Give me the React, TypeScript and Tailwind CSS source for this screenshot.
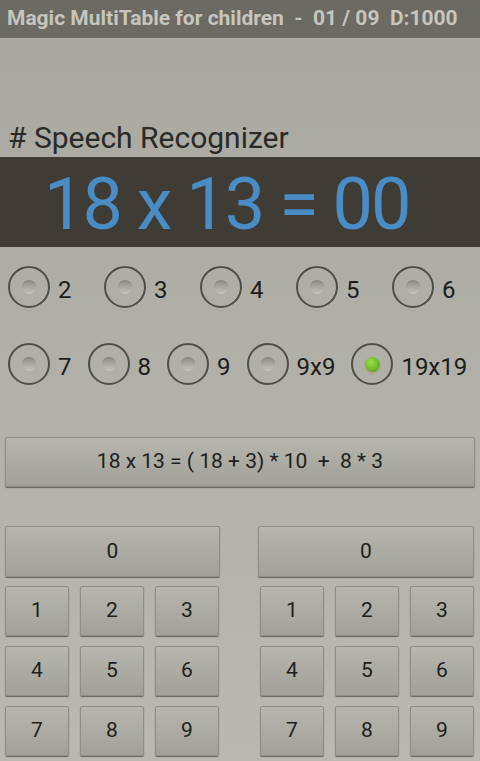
const font = { fontFamily: "Roboto, 'Liberation Sans', sans-serif" };

function Radio({ label, checked = false }: { label: string; checked?: boolean }) {
  return (
    <div className="flex items-start pl-2 pr-[8px]">
      <div className="w-[42px] h-[42px] rounded-full border-2 border-[#4e4e48] flex items-center justify-center">
        {checked ? (
          <div className="w-[15px] h-[15px] rounded-full bg-[radial-gradient(circle_at_40%_35%,#9be04a,#6cb526_60%,#4f8f1a)] shadow-[0_2px_2px_rgba(200,120,60,0.35)]" />
        ) : (
          <div className="w-[14px] h-[14px] rounded-full bg-gradient-to-b from-[#8f8f89] to-[#c4c4bc] border-t border-[#85857f]" />
        )}
      </div>
      <span className="ml-2 text-[24px] leading-[48px] text-[#1c1c1a]">{label}</span>
    </div>
  );
}

function Key({ label, className = "" }: { label: string; className?: string }) {
  return (
    <div
      className={
        "flex items-center justify-center rounded-[2px] border border-[#8e8e88] bg-gradient-to-b from-[#b6b6ae] to-[#a1a19a] shadow-[0_1px_1px_rgba(0,0,0,0.45)] text-[21px] text-[#1e1e1c] " +
        className
      }
    >
      {label}
    </div>
  );
}

function Keypad({ right = false }: { right?: boolean }) {
  const keys = ["1", "2", "3", "4", "5", "6", "7", "8", "9"];
  return (
    <div className={right ? "w-[240px] pl-[18px]" : "w-[240px] pl-[5px]"}>
      <Key label="0" className={right ? "w-[216px] h-[51px]" : "w-[215px] h-[51px]"} />
      <div className={"grid grid-cols-[64px_64px_64px] gap-x-[11px] gap-y-[10px] mt-[9px] " + (right ? "ml-[2px]" : "")}>
        {keys.map((k) => (
          <Key key={k} label={k} className="h-[50px]" />
        ))}
      </div>
    </div>
  );
}

export default function App() {
  return (
    <div
      style={font}
      className="w-[480px] h-[761px] overflow-hidden bg-gradient-to-b from-[#a8a8a0] to-[#b9b9b1]"
    >
      <div className="h-[38px] bg-[#6b6a63] flex items-center pl-[7px] text-[21px] font-bold text-[#c6c6be] whitespace-pre">
        Magic MultiTable for children  -  01 / 09  D:1000
      </div>

      <div className="mt-[82px] mb-[2px] pl-2 text-[30px] leading-[35px] text-[#2a2a27]">
        # Speech Recognizer
      </div>

      <div className="h-[90px] bg-[#3e3c34] pt-[6px] pl-[44px]">
        <div className="text-[72px] leading-[84px] text-[#4a8cc6] whitespace-pre tracking-[-2px]">
          18 x 13 = 00
        </div>
      </div>

      <div className="mt-[19px] grid grid-cols-5">
        {["2", "3", "4", "5", "6"].map((n) => (
          <Radio key={n} label={n} />
        ))}
      </div>

      <div className="mt-[29px] flex">
        <Radio label="7" />
        <Radio label="8" />
        <Radio label="9" />
        <Radio label="9x9" />
        <Radio label="19x19" checked />
      </div>

      <div className="mt-[46px] px-[5px]">
        <Key
          label="18 x 13 = ( 18 + 3) * 10  +  8 * 3"
          className="h-[50px] w-[470px] whitespace-pre"
        />
      </div>

      <div className="mt-[39px] flex">
        <Keypad />
        <Keypad right />
      </div>
    </div>
  );
}
